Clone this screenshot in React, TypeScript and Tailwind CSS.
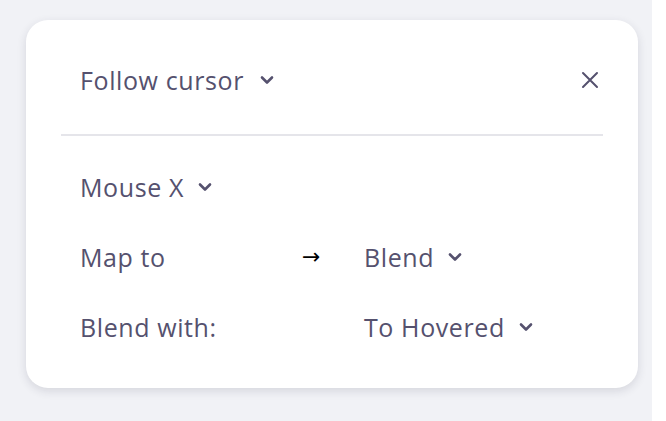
import React from "react";

const Chevron = () => (
  <svg width="16" height="10" viewBox="0 0 16 10" className="shrink-0">
    <path d="M3 2.5 L8 7.5 L13 2.5" fill="none" stroke="#55516e" strokeWidth="2.6" strokeLinecap="round" strokeLinejoin="round" />
  </svg>
);

const Close = () => (
  <svg width="18" height="18" viewBox="0 0 18 18">
    <path d="M2 2 L16 16 M16 2 L2 16" fill="none" stroke="#55516e" strokeWidth="2" strokeLinecap="round" />
  </svg>
);

export default function App() {
  const font = { fontFamily: '"Open Sans", "Noto Sans", sans-serif' };
  return (
    <div className="w-[652px] h-[421px] bg-[#f1f2f6] pt-[20px] pl-[26px]" style={font}>
      <div className="w-[612px] h-[368px] bg-white rounded-[22px] shadow-[0_3px_10px_rgba(40,40,70,0.14)] px-[35px] flex flex-col">
        <div className="h-[114px] pt-[6px] pl-[19px] pr-[4px] flex items-center justify-between">
          <div className="flex items-center gap-[15px]">
            <span className="text-[25px] font-medium tracking-[0.6px] text-[#55516e] leading-none">Follow cursor</span>
            <Chevron />
          </div>
          <Close />
        </div>
        <div className="h-[2px] bg-[#e5e5ea]" />
        <div className="pt-[16px] pl-[19px] flex flex-col">
          <div className="h-[70px] flex items-center gap-[13px]">
            <span className="text-[25px] tracking-[0.6px] text-[#55516e] leading-none">Mouse X</span>
            <Chevron />
          </div>
          <div className="h-[70px] grid grid-cols-[222px_62px_auto] items-center">
            <span className="text-[25px] tracking-[0.6px] text-[#55516e] leading-none">Map to</span>
            <span className="text-[22px] text-black leading-none" style={{ fontFamily: '"DejaVu Sans", sans-serif' }}>→</span>
            <div className="flex items-center gap-[13px]">
              <span className="text-[25px] tracking-[0.6px] text-[#55516e] leading-none">Blend</span>
              <Chevron />
            </div>
          </div>
          <div className="h-[70px] grid grid-cols-[222px_62px_auto] items-center">
            <span className="text-[25px] tracking-[0.6px] text-[#55516e] leading-none">Blend with:</span>
            <span />
            <div className="flex items-center gap-[13px]">
              <span className="text-[25px] tracking-[0.6px] text-[#55516e] leading-none">To Hovered</span>
              <Chevron />
            </div>
          </div>
        </div>
      </div>
    </div>
  );
}
